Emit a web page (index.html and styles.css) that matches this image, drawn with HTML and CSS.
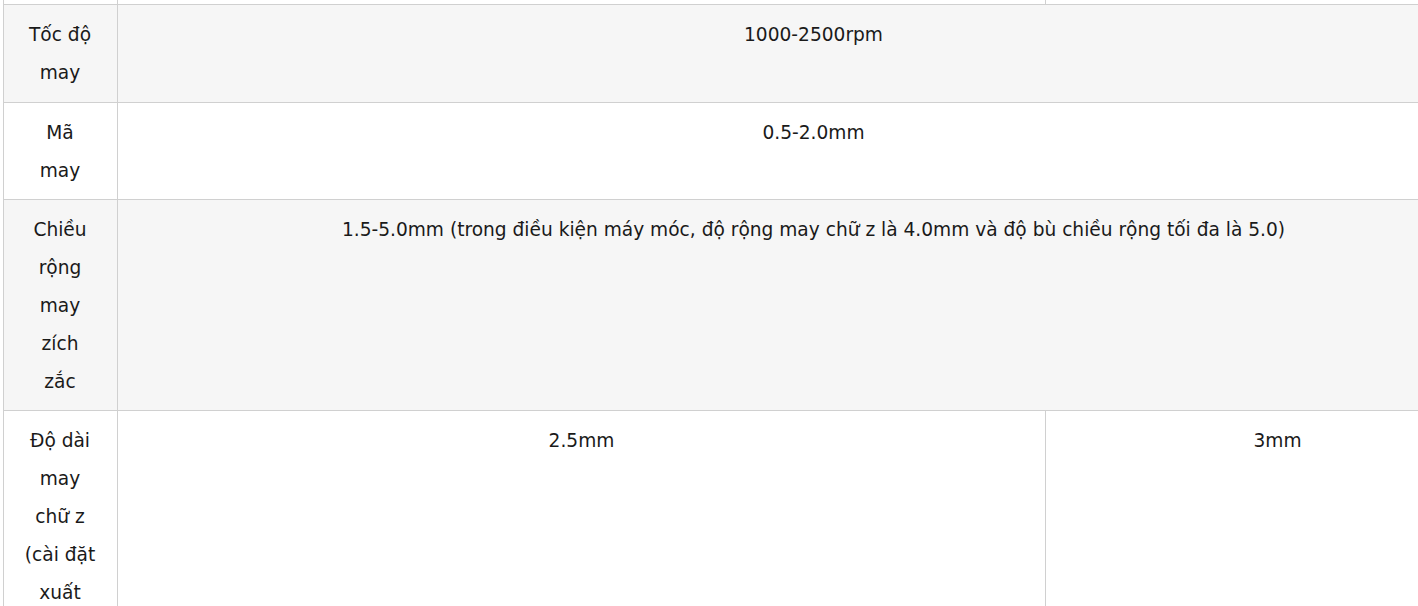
FILE: index.html
```html
<!DOCTYPE html>
<html lang="vi">
<head>
<meta charset="utf-8">
<link rel="stylesheet" href="styles.css">
</head>
<body>
<div class="wrap">
<table class="spec">
<tr class="top"><td class="label"></td><td></td><td class="last"></td></tr>
<tr class="alt first"><td class="label">Tốc độ may</td><td colspan="2">1000-2500rpm</td></tr>
<tr><td class="label">Mã may</td><td colspan="2">0.5-2.0mm</td></tr>
<tr class="alt"><td class="label">Chiều rộng may zích zắc</td><td colspan="2">1.5-5.0mm (trong điều kiện máy móc, độ rộng may chữ z là 4.0mm và độ bù chiều rộng tối đa là 5.0)</td></tr>
<tr><td class="label">Độ dài may chữ z (cài đặt xuất xưởng)</td><td>2.5mm</td><td class="last">3mm</td></tr>
</table>
</div>
</body>
</html>
```
FILE: styles.css
```css
html, body { margin: 0; padding: 0; background: #fff; }
body { overflow: hidden; height: 606px; width: 1418px; }
.wrap { padding-left: 3px; }
.spec {
  border-collapse: collapse;
  width: 1507px;
  table-layout: fixed;
  font-family: "DejaVu Sans", sans-serif;
  font-size: 18.6px;
  color: #1a1a1a;
  line-height: 38px;
}
.spec td {
  border: 1px solid #d0d0d0;
  padding: 11px 10px 9px;
  text-align: center;
  vertical-align: top;
}
.spec td.label { width: 72px; padding-left: 20px; padding-right: 21px; }
.spec td.last { width: 443px; }
.spec tr.top td { padding-top: 0; padding-bottom: 0; height: 4px; line-height: 0; border-top: none; }
.spec tr.first td { padding-bottom: 10px; }
.spec tr.alt td { background: #f6f6f6; }
```
